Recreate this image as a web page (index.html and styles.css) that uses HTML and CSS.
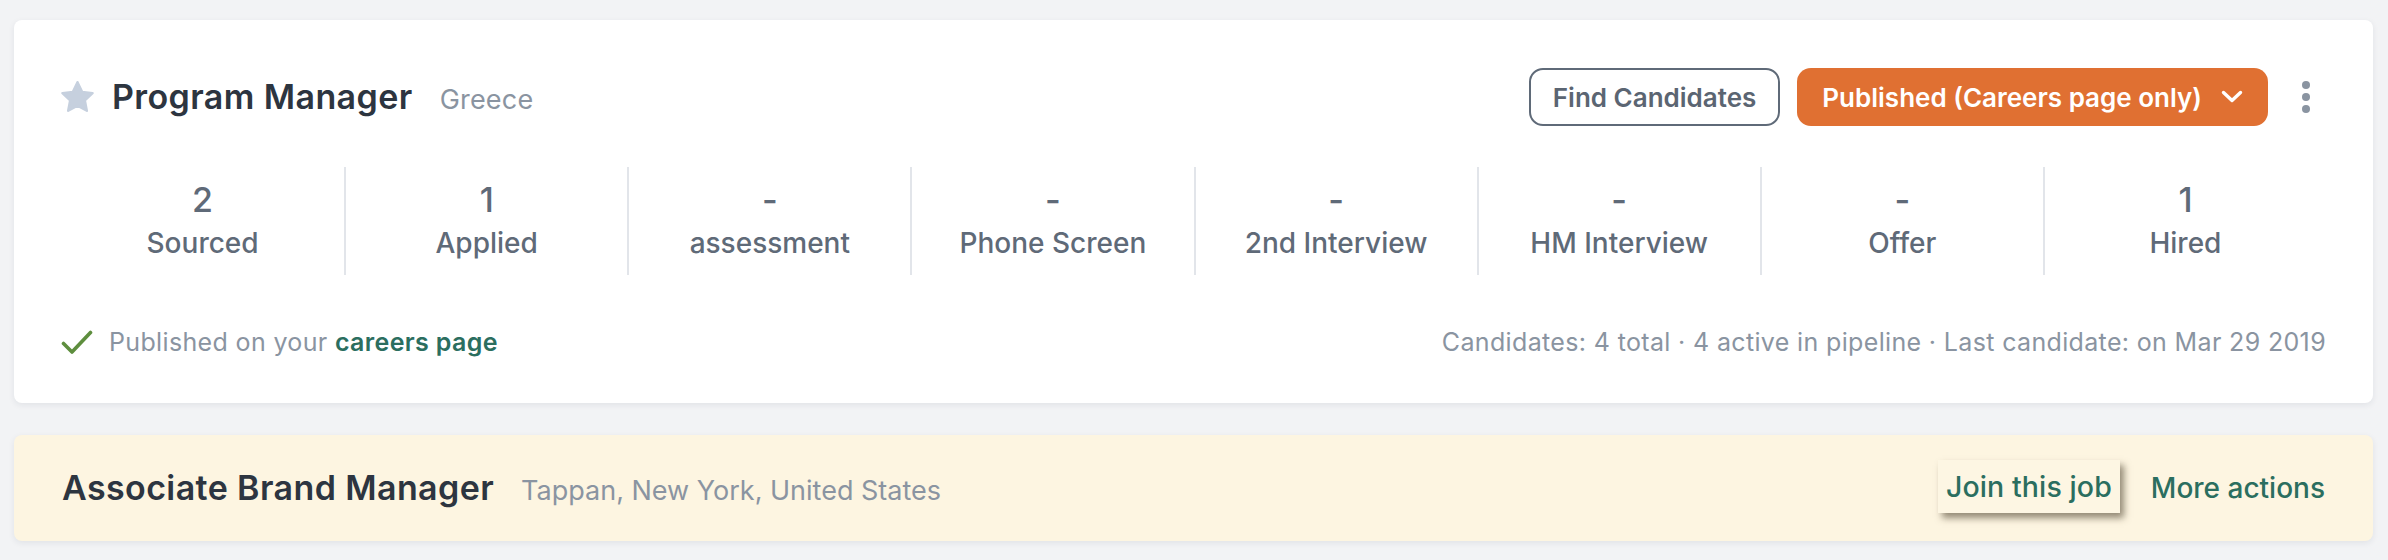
FILE: index.html
```html
<!DOCTYPE html>
<html lang="en">
<head>
<meta charset="utf-8">
<title>Jobs</title>
<link rel="stylesheet" href="styles.css">
</head>
<body>
<div class="page">
  <section class="card job">
    <div class="job-head">
      <div class="title-group">
        <svg class="star" viewBox="1.2 0.8 21.6 20.6" width="33" height="31"><path d="M12 1.6l3.05 6.4 6.95.85-5.1 4.85 1.3 6.9L12 17.2l-6.2 3.4 1.3-6.9L2 8.85l6.95-.85z" fill="#c6d0de" stroke="#c6d0de" stroke-width="1.6" stroke-linejoin="round"/></svg>
        <h2 class="job-title">Program Manager</h2>
        <span class="job-loc">Greece</span>
      </div>
      <div class="actions">
        <button class="btn-outline">Find Candidates</button>
        <button class="btn-orange">Published (Careers page only)
          <svg class="chev" viewBox="0 0 22 14" width="22" height="14"><path d="M2.5 2.5L11 10.5 19.5 2.5" fill="none" stroke="#fff" stroke-width="3.4" stroke-linecap="round" stroke-linejoin="round"/></svg>
        </button>
        <div class="kebab"><span></span><span></span><span></span></div>
      </div>
    </div>
    <div class="stats">
      <div class="stat"><div class="num">2</div><div class="lbl">Sourced</div></div>
      <div class="stat"><div class="num">1</div><div class="lbl">Applied</div></div>
      <div class="stat"><div class="num">-</div><div class="lbl">assessment</div></div>
      <div class="stat"><div class="num">-</div><div class="lbl">Phone Screen</div></div>
      <div class="stat"><div class="num">-</div><div class="lbl">2nd Interview</div></div>
      <div class="stat"><div class="num">-</div><div class="lbl">HM Interview</div></div>
      <div class="stat"><div class="num">-</div><div class="lbl">Offer</div></div>
      <div class="stat"><div class="num">1</div><div class="lbl">Hired</div></div>
    </div>
    <div class="job-foot">
      <div class="pub">
        <svg class="check" viewBox="0 0 32 24" width="32" height="24"><path d="M2.5 13.5l8.5 8.5L29.5 2.5" fill="none" stroke="#5e8e3e" stroke-width="3.6" stroke-linecap="round" stroke-linejoin="round"/></svg>
        <span>Published on your <a class="link" href="#">careers page</a></span>
      </div>
      <div class="meta">Candidates: 4 total · 4 active in pipeline · Last candidate: on Mar 29 2019</div>
    </div>
  </section>
  <section class="card job2">
    <div class="title-group">
      <h2 class="job-title">Associate Brand Manager</h2>
      <span class="job-loc">Tappan, New York, United States</span>
    </div>
    <div class="actions2">
      <button class="btn-join">Join this job</button>
      <a class="more" href="#">More actions</a>
    </div>
  </section>
</div>
</body>
</html>
```

FILE: styles.css
```css
* { box-sizing: border-box; }
html, body { margin: 0; padding: 0; }
body {
  background: #f2f3f5;
  font-family: Inter, "Noto Sans", "Liberation Sans", sans-serif;
  width: 2388px;
  height: 560px;
  overflow: hidden;
}
.page {
  padding: 20px 15px 0 14px;
  display: flex;
  flex-direction: column;
  gap: 32px;
}
.card {
  background: #fff;
  border-radius: 8px;
  box-shadow: 0 2px 6px rgba(30, 40, 60, 0.08);
}
.job {
  padding: 48px 47px 44px 47px;
}
.job-head {
  display: flex;
  align-items: center;
  justify-content: space-between;
  height: 58px;
}
.title-group {
  display: flex;
  align-items: baseline;
}
.star {
  align-self: center;
  margin-right: 18px;
  position: relative;
  top: -1px;
}
.job-title {
  margin: 0;
  font-size: 34px;
  line-height: 40px;
  font-weight: 600;
  color: #2d3540;
  letter-spacing: 0.4px;
}
.job-loc {
  margin-left: 27px;
  font-size: 27px;
  color: #8a94a1;
  letter-spacing: 0.2px;
}
.job2 .job-loc {
  letter-spacing: 0;
}
.actions {
  display: flex;
  align-items: center;
}
button {
  font-family: inherit;
  cursor: pointer;
}
.btn-outline {
  height: 58px;
  padding: 0 22px;
  background: #fff;
  border: 2px solid #5f6a78;
  border-radius: 14px;
  color: #5b6572;
  font-size: 26px;
  font-weight: 600;
}
.btn-orange {
  margin-left: 17px;
  height: 58px;
  padding: 0 25px;
  background: #e07032;
  border: none;
  border-radius: 14px;
  color: #fff;
  font-size: 26px;
  font-weight: 600;
  display: flex;
  align-items: center;
  gap: 19px;
}
.kebab {
  width: 40px;
  margin-left: 18px;
  display: flex;
  flex-direction: column;
  align-items: center;
  gap: 4px;
}
.kebab span {
  width: 8px;
  height: 8px;
  border-radius: 50%;
  background: #8a94a1;
}
.stats {
  margin-top: 41px;
  display: grid;
  grid-template-columns: repeat(8, 1fr);
}
.stat {
  padding: 13px 0 15px;
  text-align: center;
  border-left: 2px solid #e2e5ea;
}
.stat:first-child { border-left: none; }
.num {
  font-size: 34px;
  line-height: 40px;
  font-weight: 500;
  color: #5f6a78;
}
.lbl {
  margin-top: 6px;
  font-size: 28px;
  line-height: 34px;
  font-weight: 500;
  color: #5f6a78;
}
.job-foot {
  margin-top: 50px;
  display: flex;
  justify-content: space-between;
  align-items: center;
  height: 34px;
}
.pub {
  display: flex;
  align-items: center;
  gap: 16px;
  font-size: 25px;
  color: #8a94a1;
  letter-spacing: 0.35px;
}
.link {
  color: #2b6e5f;
  font-weight: 600;
  text-decoration: none;
}
.meta {
  font-size: 25px;
  color: #8a94a1;
  letter-spacing: 0.35px;
}
.job2 {
  background: #fdf5e1;
  height: 106px;
  padding: 0 48px;
  display: flex;
  align-items: center;
  justify-content: space-between;
}
.actions2 {
  display: flex;
  align-items: center;
}
.btn-join {
  height: 53px;
  padding: 0 8px;
  background: #fdf6e3;
  border: none;
  border-radius: 0;
  box-shadow: 4px 5px 7px rgba(60, 50, 30, 0.55);
  color: #2b6e5f;
  font-size: 28.5px;
  font-weight: 500;
  letter-spacing: 0.1px;
  position: relative;
  top: -2px;
}
.more {
  margin-left: 31px;
  color: #2b6e5f;
  font-size: 28px;
  font-weight: 500;
  text-decoration: none;
}
```
